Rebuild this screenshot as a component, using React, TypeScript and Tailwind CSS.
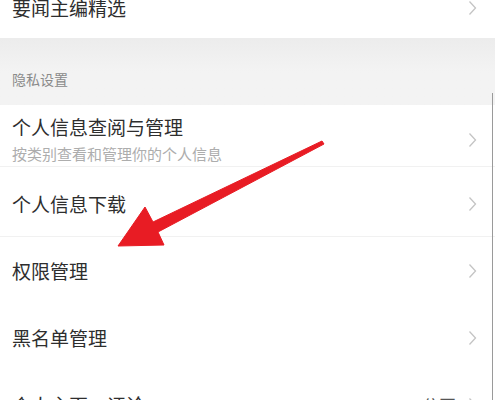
import React from 'react'

const font = { fontFamily: '"Noto Sans CJK SC", "Noto Sans", sans-serif' }

function Chevron() {
  return (
    <svg width="9" height="16" viewBox="0 0 9 16" className="shrink-0">
      <path d="M1.5 1.5 L7.5 8 L1.5 14.5" fill="none" stroke="#c4c4c4" strokeWidth="1.3" />
    </svg>
  )
}

function Row({ title, sub, h, right, divider = true }: { title: string; sub?: string; h: string; right?: string; divider?: boolean }) {
  return (
    <div className={`flex items-center justify-between pl-3 pr-[18px] ${h} ${divider ? 'border-b border-[#f1f1f1]' : ''}`}>
      <div className="flex flex-col">
        <span className="text-[19px] leading-[24px] text-[#2e2e2e]">{title}</span>
        {sub && <span className="mt-[5px] text-[15px] leading-[20px] text-[#adadad]">{sub}</span>}
      </div>
      <div className="flex items-center gap-3">
        {right && <span className="text-[17px] text-[#555555]">{right}</span>}
        <Chevron />
      </div>
    </div>
  )
}

export default function App() {
  return (
    <div className="relative w-[495px] h-[400px] overflow-hidden bg-white" style={font}>
      <div className="-mt-[4px]">
        <div className="flex justify-between pl-3 pr-[18px] h-[42px] items-start">
          <span className="text-[19px] leading-[24px] text-[#2e2e2e]">要闻主编精选</span>
          <div className="pt-[4px]">
            <Chevron />
          </div>
        </div>
        <div className="h-[67px] bg-gradient-to-b from-[#ececec] via-[#f3f3f3] to-[#f3f3f3] flex items-end pl-3 pb-[17px]">
          <span className="text-[14px] leading-[18px] text-[#8a8a8a]">隐私设置</span>
        </div>
        <div className="bg-white">
          <Row title="个人信息查阅与管理" sub="按类别查看和管理你的个人信息" h="h-[62px] pt-[8px]" />
          <Row title="个人信息下载" h="h-[70px] pt-[4px]" />
          <Row title="权限管理" h="h-[67px]" divider={false} />
          <Row title="黑名单管理" h="h-[67px]" divider={false} />
          <Row title="个人主页、评论" h="h-[67px]" right="公开" divider={false} />
        </div>
      </div>
      <div className="absolute right-[2px] top-[93px] bottom-0 w-[1.5px] bg-[#9a9a9a]" />
      <svg className="absolute inset-0" width="495" height="400" viewBox="0 0 495 400">
        <polygon
          points="118,246 145,207 153,222 322,141 324,144 158,232 164,245"
          fill="#e81c24"
          stroke="#e81c24"
          strokeWidth="1"
          strokeLinejoin="round"
        />
      </svg>
    </div>
  )
}
